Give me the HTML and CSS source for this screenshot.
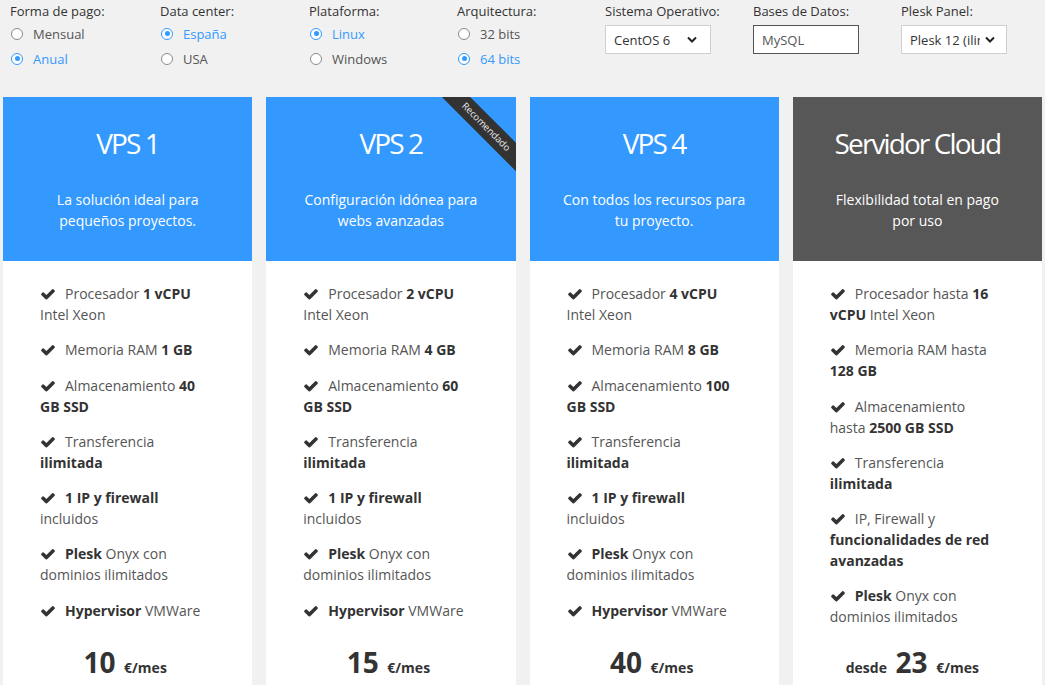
FILE: index.html
```html
<!DOCTYPE html>
<html lang="es">
<head>
<meta charset="utf-8">
<title>Planes VPS</title>
<link rel="stylesheet" href="styles.css">
</head>
<body>
<div class="filters">
  <div class="fgroup w150">
    <div class="flabel">Forma de pago:</div>
    <div class="opt"><span class="radio"></span>Mensual</div>
    <div class="opt on"><span class="radio"></span>Anual</div>
  </div>
  <div class="fgroup w149">
    <div class="flabel">Data center:</div>
    <div class="opt on"><span class="radio"></span>España</div>
    <div class="opt"><span class="radio"></span>USA</div>
  </div>
  <div class="fgroup">
    <div class="flabel">Plataforma:</div>
    <div class="opt on"><span class="radio"></span>Linux</div>
    <div class="opt"><span class="radio"></span>Windows</div>
  </div>
  <div class="fgroup">
    <div class="flabel">Arquitectura:</div>
    <div class="opt"><span class="radio"></span>32 bits</div>
    <div class="opt on"><span class="radio"></span>64 bits</div>
  </div>
  <div class="fgroup">
    <div class="flabel">Sistema Operativo:</div>
    <div class="select"><span class="seltext">CentOS 6</span><svg class="chev" width="10" height="7" viewBox="0 0 10 7"><polyline points="1,1.5 5,5.5 9,1.5" fill="none" stroke="#222" stroke-width="2"/></svg></div>
  </div>
  <div class="fgroup">
    <div class="flabel">Bases de Datos:</div>
    <div class="select input"><span class="seltext">MySQL</span></div>
  </div>
  <div class="fgroup">
    <div class="flabel">Plesk Panel:</div>
    <div class="select plesk"><span class="seltext">Plesk 12 (ilimitado)</span><svg class="chev" width="10" height="7" viewBox="0 0 10 7"><polyline points="1,1.5 5,5.5 9,1.5" fill="none" stroke="#222" stroke-width="2"/></svg></div>
  </div>
</div>

<div class="plans">
  <div class="card">
    <div class="head">
      <h2 class="title">VPS 1</h2>
      <p class="sub">La solución ideal para pequeños proyectos.</p>
    </div>
    <div class="body">
      <ul class="feats">
        <li><svg class="ck" viewBox="0 0 1792 1792"><path d="M1671 566q0 40-28 68l-724 724-136 136q-28 28-68 28t-68-28l-136-136-362-362q-28-28-28-68t28-68l136-136q28-28 68-28t68 28l294 295 656-657q28-28 68-28t68 28l136 136q28 28 28 68z"/></svg>Procesador <b>1 vCPU</b> Intel Xeon</li>
        <li><svg class="ck" viewBox="0 0 1792 1792"><path d="M1671 566q0 40-28 68l-724 724-136 136q-28 28-68 28t-68-28l-136-136-362-362q-28-28-28-68t28-68l136-136q28-28 68-28t68 28l294 295 656-657q28-28 68-28t68 28l136 136q28 28 28 68z"/></svg>Memoria RAM <b>1 GB</b></li>
        <li><svg class="ck" viewBox="0 0 1792 1792"><path d="M1671 566q0 40-28 68l-724 724-136 136q-28 28-68 28t-68-28l-136-136-362-362q-28-28-28-68t28-68l136-136q28-28 68-28t68 28l294 295 656-657q28-28 68-28t68 28l136 136q28 28 28 68z"/></svg>Almacenamiento <b>40 GB SSD</b></li>
        <li><svg class="ck" viewBox="0 0 1792 1792"><path d="M1671 566q0 40-28 68l-724 724-136 136q-28 28-68 28t-68-28l-136-136-362-362q-28-28-28-68t28-68l136-136q28-28 68-28t68 28l294 295 656-657q28-28 68-28t68 28l136 136q28 28 28 68z"/></svg>Transferencia <b>ilimitada</b></li>
        <li><svg class="ck" viewBox="0 0 1792 1792"><path d="M1671 566q0 40-28 68l-724 724-136 136q-28 28-68 28t-68-28l-136-136-362-362q-28-28-28-68t28-68l136-136q28-28 68-28t68 28l294 295 656-657q28-28 68-28t68 28l136 136q28 28 28 68z"/></svg><b>1 IP y firewall</b> incluidos</li>
        <li><svg class="ck" viewBox="0 0 1792 1792"><path d="M1671 566q0 40-28 68l-724 724-136 136q-28 28-68 28t-68-28l-136-136-362-362q-28-28-28-68t28-68l136-136q28-28 68-28t68 28l294 295 656-657q28-28 68-28t68 28l136 136q28 28 28 68z"/></svg><b>Plesk</b> Onyx con dominios ilimitados</li>
        <li><svg class="ck" viewBox="0 0 1792 1792"><path d="M1671 566q0 40-28 68l-724 724-136 136q-28 28-68 28t-68-28l-136-136-362-362q-28-28-28-68t28-68l136-136q28-28 68-28t68 28l294 295 656-657q28-28 68-28t68 28l136 136q28 28 28 68z"/></svg><b>Hypervisor</b> VMWare</li>
      </ul>
      <div class="price"><span class="num">10</span> <span class="unit">€/mes</span></div>
    </div>
  </div>

  <div class="card">
    <div class="head">
      <h2 class="title">VPS 2</h2>
      <p class="sub">Configuración idónea para webs avanzadas</p>
      <div class="ribbon-wrap"><div class="ribbon">Recomendado</div></div>
    </div>
    <div class="body">
      <ul class="feats">
        <li><svg class="ck" viewBox="0 0 1792 1792"><path d="M1671 566q0 40-28 68l-724 724-136 136q-28 28-68 28t-68-28l-136-136-362-362q-28-28-28-68t28-68l136-136q28-28 68-28t68 28l294 295 656-657q28-28 68-28t68 28l136 136q28 28 28 68z"/></svg>Procesador <b>2 vCPU</b> Intel Xeon</li>
        <li><svg class="ck" viewBox="0 0 1792 1792"><path d="M1671 566q0 40-28 68l-724 724-136 136q-28 28-68 28t-68-28l-136-136-362-362q-28-28-28-68t28-68l136-136q28-28 68-28t68 28l294 295 656-657q28-28 68-28t68 28l136 136q28 28 28 68z"/></svg>Memoria RAM <b>4 GB</b></li>
        <li><svg class="ck" viewBox="0 0 1792 1792"><path d="M1671 566q0 40-28 68l-724 724-136 136q-28 28-68 28t-68-28l-136-136-362-362q-28-28-28-68t28-68l136-136q28-28 68-28t68 28l294 295 656-657q28-28 68-28t68 28l136 136q28 28 28 68z"/></svg>Almacenamiento <b>60 GB SSD</b></li>
        <li><svg class="ck" viewBox="0 0 1792 1792"><path d="M1671 566q0 40-28 68l-724 724-136 136q-28 28-68 28t-68-28l-136-136-362-362q-28-28-28-68t28-68l136-136q28-28 68-28t68 28l294 295 656-657q28-28 68-28t68 28l136 136q28 28 28 68z"/></svg>Transferencia <b>ilimitada</b></li>
        <li><svg class="ck" viewBox="0 0 1792 1792"><path d="M1671 566q0 40-28 68l-724 724-136 136q-28 28-68 28t-68-28l-136-136-362-362q-28-28-28-68t28-68l136-136q28-28 68-28t68 28l294 295 656-657q28-28 68-28t68 28l136 136q28 28 28 68z"/></svg><b>1 IP y firewall</b> incluidos</li>
        <li><svg class="ck" viewBox="0 0 1792 1792"><path d="M1671 566q0 40-28 68l-724 724-136 136q-28 28-68 28t-68-28l-136-136-362-362q-28-28-28-68t28-68l136-136q28-28 68-28t68 28l294 295 656-657q28-28 68-28t68 28l136 136q28 28 28 68z"/></svg><b>Plesk</b> Onyx con dominios ilimitados</li>
        <li><svg class="ck" viewBox="0 0 1792 1792"><path d="M1671 566q0 40-28 68l-724 724-136 136q-28 28-68 28t-68-28l-136-136-362-362q-28-28-28-68t28-68l136-136q28-28 68-28t68 28l294 295 656-657q28-28 68-28t68 28l136 136q28 28 28 68z"/></svg><b>Hypervisor</b> VMWare</li>
      </ul>
      <div class="price"><span class="num">15</span> <span class="unit">€/mes</span></div>
    </div>
  </div>

  <div class="card">
    <div class="head">
      <h2 class="title">VPS 4</h2>
      <p class="sub">Con todos los recursos para tu proyecto.</p>
    </div>
    <div class="body">
      <ul class="feats">
        <li><svg class="ck" viewBox="0 0 1792 1792"><path d="M1671 566q0 40-28 68l-724 724-136 136q-28 28-68 28t-68-28l-136-136-362-362q-28-28-28-68t28-68l136-136q28-28 68-28t68 28l294 295 656-657q28-28 68-28t68 28l136 136q28 28 28 68z"/></svg>Procesador <b>4 vCPU</b> Intel Xeon</li>
        <li><svg class="ck" viewBox="0 0 1792 1792"><path d="M1671 566q0 40-28 68l-724 724-136 136q-28 28-68 28t-68-28l-136-136-362-362q-28-28-28-68t28-68l136-136q28-28 68-28t68 28l294 295 656-657q28-28 68-28t68 28l136 136q28 28 28 68z"/></svg>Memoria RAM <b>8 GB</b></li>
        <li><svg class="ck" viewBox="0 0 1792 1792"><path d="M1671 566q0 40-28 68l-724 724-136 136q-28 28-68 28t-68-28l-136-136-362-362q-28-28-28-68t28-68l136-136q28-28 68-28t68 28l294 295 656-657q28-28 68-28t68 28l136 136q28 28 28 68z"/></svg>Almacenamiento <b>100 GB SSD</b></li>
        <li><svg class="ck" viewBox="0 0 1792 1792"><path d="M1671 566q0 40-28 68l-724 724-136 136q-28 28-68 28t-68-28l-136-136-362-362q-28-28-28-68t28-68l136-136q28-28 68-28t68 28l294 295 656-657q28-28 68-28t68 28l136 136q28 28 28 68z"/></svg>Transferencia <b>ilimitada</b></li>
        <li><svg class="ck" viewBox="0 0 1792 1792"><path d="M1671 566q0 40-28 68l-724 724-136 136q-28 28-68 28t-68-28l-136-136-362-362q-28-28-28-68t28-68l136-136q28-28 68-28t68 28l294 295 656-657q28-28 68-28t68 28l136 136q28 28 28 68z"/></svg><b>1 IP y firewall</b> incluidos</li>
        <li><svg class="ck" viewBox="0 0 1792 1792"><path d="M1671 566q0 40-28 68l-724 724-136 136q-28 28-68 28t-68-28l-136-136-362-362q-28-28-28-68t28-68l136-136q28-28 68-28t68 28l294 295 656-657q28-28 68-28t68 28l136 136q28 28 28 68z"/></svg><b>Plesk</b> Onyx con dominios ilimitados</li>
        <li><svg class="ck" viewBox="0 0 1792 1792"><path d="M1671 566q0 40-28 68l-724 724-136 136q-28 28-68 28t-68-28l-136-136-362-362q-28-28-28-68t28-68l136-136q28-28 68-28t68 28l294 295 656-657q28-28 68-28t68 28l136 136q28 28 28 68z"/></svg><b>Hypervisor</b> VMWare</li>
      </ul>
      <div class="price"><span class="num">40</span> <span class="unit">€/mes</span></div>
    </div>
  </div>

  <div class="card">
    <div class="head dark">
      <h2 class="title">Servidor Cloud</h2>
      <p class="sub">Flexibilidad total en pago por uso</p>
    </div>
    <div class="body">
      <ul class="feats">
        <li><svg class="ck" viewBox="0 0 1792 1792"><path d="M1671 566q0 40-28 68l-724 724-136 136q-28 28-68 28t-68-28l-136-136-362-362q-28-28-28-68t28-68l136-136q28-28 68-28t68 28l294 295 656-657q28-28 68-28t68 28l136 136q28 28 28 68z"/></svg>Procesador hasta <b>16 vCPU</b> Intel Xeon</li>
        <li><svg class="ck" viewBox="0 0 1792 1792"><path d="M1671 566q0 40-28 68l-724 724-136 136q-28 28-68 28t-68-28l-136-136-362-362q-28-28-28-68t28-68l136-136q28-28 68-28t68 28l294 295 656-657q28-28 68-28t68 28l136 136q28 28 28 68z"/></svg>Memoria RAM hasta <b>128 GB</b></li>
        <li><svg class="ck" viewBox="0 0 1792 1792"><path d="M1671 566q0 40-28 68l-724 724-136 136q-28 28-68 28t-68-28l-136-136-362-362q-28-28-28-68t28-68l136-136q28-28 68-28t68 28l294 295 656-657q28-28 68-28t68 28l136 136q28 28 28 68z"/></svg>Almacenamiento hasta <b>2500 GB SSD</b></li>
        <li><svg class="ck" viewBox="0 0 1792 1792"><path d="M1671 566q0 40-28 68l-724 724-136 136q-28 28-68 28t-68-28l-136-136-362-362q-28-28-28-68t28-68l136-136q28-28 68-28t68 28l294 295 656-657q28-28 68-28t68 28l136 136q28 28 28 68z"/></svg>Transferencia <b>ilimitada</b></li>
        <li><svg class="ck" viewBox="0 0 1792 1792"><path d="M1671 566q0 40-28 68l-724 724-136 136q-28 28-68 28t-68-28l-136-136-362-362q-28-28-28-68t28-68l136-136q28-28 68-28t68 28l294 295 656-657q28-28 68-28t68 28l136 136q28 28 28 68z"/></svg>IP, Firewall y <b>funcionalidades de red avanzadas</b></li>
        <li><svg class="ck" viewBox="0 0 1792 1792"><path d="M1671 566q0 40-28 68l-724 724-136 136q-28 28-68 28t-68-28l-136-136-362-362q-28-28-28-68t28-68l136-136q28-28 68-28t68 28l294 295 656-657q28-28 68-28t68 28l136 136q28 28 28 68z"/></svg><b>Plesk</b> Onyx con dominios ilimitados</li>
      </ul>
      <div class="price"><span class="unit">desde</span> <span class="num">23</span> <span class="unit">€/mes</span></div>
    </div>
  </div>
</div>
</body>
</html>
```
FILE: styles.css
```css
* { box-sizing: border-box; }
html, body { margin: 0; padding: 0; }
body {
  background: #f1f1f1;
  font-family: "Open Sans", "DejaVu Sans", sans-serif;
  color: #555;
  overflow: hidden;
}

.filters {
  display: flex;
  height: 97px;
  padding: 2px 0 0 10px;
}
.fgroup { width: 148px; flex: none; }
.fgroup.w150 { width: 150px; }
.fgroup.w149 { width: 149px; }
.flabel {
  font-size: 13px;
  line-height: 18px;
  color: #333;
}
.opt {
  display: flex;
  align-items: center;
  height: 25px;
  font-size: 13px;
  color: #555;
}
.flabel + .opt { margin-top: 1px; }
.radio {
  width: 12px;
  height: 12px;
  border: 1px solid #8a8a8a;
  border-radius: 50%;
  margin: 0 10px 0 1px;
  background: #fff;
  display: inline-flex;
  align-items: center;
  justify-content: center;
}
.opt.on { color: #3399ff; }
.opt.on .radio { border-color: #3399ff; }
.opt.on .radio::after {
  content: "";
  width: 5px;
  height: 5px;
  border-radius: 50%;
  background: #3399ff;
}

.select {
  margin-top: 5px;
  width: 106px;
  height: 29px;
  background: #fff;
  border: 1px solid #cfcfcf;
  display: flex;
  align-items: center;
  justify-content: space-between;
  padding: 0 13px 0 8px;
  font-size: 13px;
  color: #333;
}
.select.input { border-color: #555; color: #555; }
.select.plesk { padding-right: 11px; }
.seltext { white-space: nowrap; overflow: hidden; }
.plesk .seltext { width: 70px; }
.chev { flex: none; }

.plans {
  display: grid;
  grid-template-columns: repeat(4, 1fr);
  column-gap: 14px;
  padding: 0 3px;
  align-items: stretch;
}
.card {
  display: flex;
  flex-direction: column;
  background: #fff;
}
.head {
  position: relative;
  height: 164px;
  background: #3399fe;
  color: #fff;
  text-align: center;
  padding: 28px 31px 0;
}
.head.dark { background: #575757; }
.title {
  margin: 0;
  font-size: 28px;
  line-height: 36px;
  font-weight: 400;
  letter-spacing: -1.9px;
}
.sub {
  margin: 28px 0 0;
  font-size: 14px;
  line-height: 21px;
}

.ribbon-wrap {
  position: absolute;
  top: 0;
  right: 0;
  width: 80px;
  height: 80px;
  overflow: hidden;
}
.ribbon {
  position: absolute;
  left: -9.5px;
  top: 19.5px;
  width: 120px;
  height: 20px;
  line-height: 20px;
  background: #333;
  color: #e8e8e8;
  font-size: 9.5px;
  text-align: center;
  transform: rotate(45deg);
}

.body {
  flex: 1;
  display: flex;
  flex-direction: column;
  padding: 22px 42px 24px 37px;
}
.feats {
  list-style: none;
  margin: 0;
  padding: 0;
}
.feats li {
  font-size: 14px;
  line-height: 21px;
  color: #555;
  margin-bottom: 14.3px;
}
.feats b { color: #333; font-weight: 700; }
.ck {
  width: 16px;
  height: 16px;
  fill: #333;
  vertical-align: -3px;
  margin-right: 9px;
}
.price {
  margin-top: auto;
  text-align: center;
  color: #333;
  font-weight: 700;
  font-size: 14px;
  line-height: 40px;
  height: 40px;
  padding-right: 5px;
}
.num { font-size: 28px; margin: 0 5px; }
.unit { font-size: 14px; }
```
